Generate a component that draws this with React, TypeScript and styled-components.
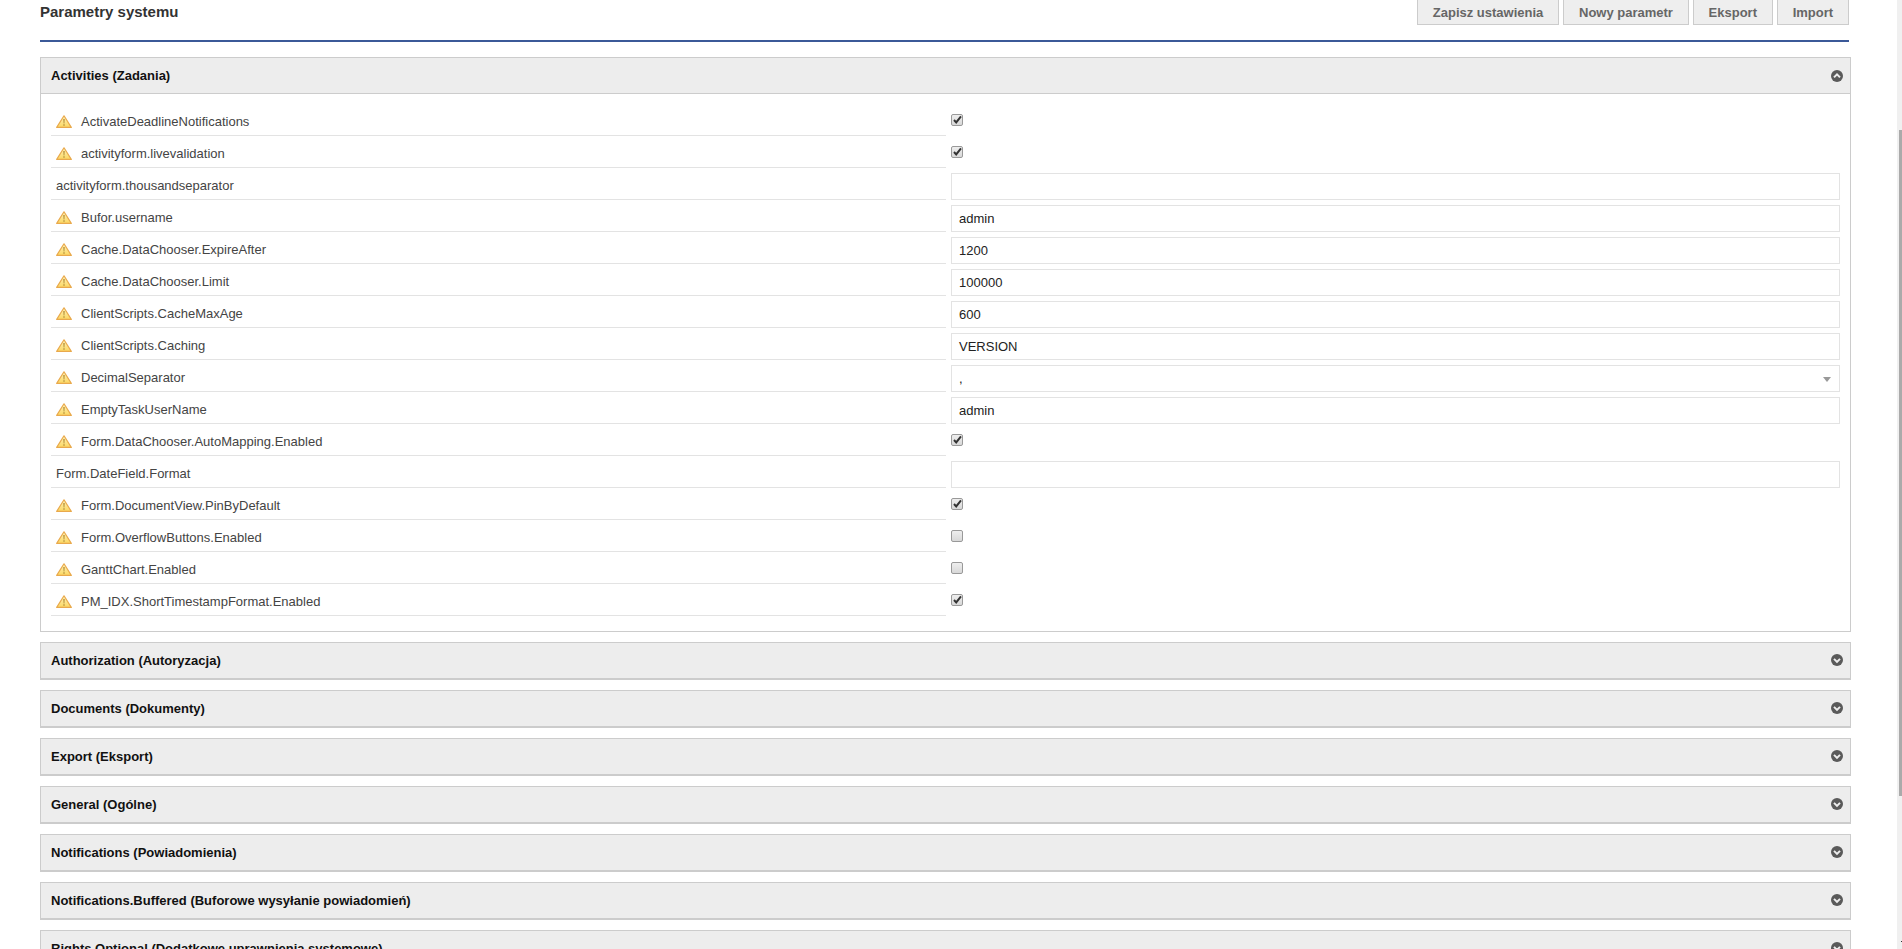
import { createGlobalStyle } from "styled-components";
import styled from "styled-components";

const GlobalStyle = createGlobalStyle`
  html, body {
    margin: 0;
    height: 100%;
    overflow: hidden;
    background: #fff;
  }
  body {
    font-family: "Liberation Sans", Arial, sans-serif;
    font-size: 13px;
  }
`;

type Param = {
  name: string;
  warn?: boolean;
  kind: "check" | "text" | "select";
  value?: string;
  checked?: boolean;
};

const params: Param[] = [
  { name: "ActivateDeadlineNotifications", warn: true, kind: "check", checked: true },
  { name: "activityform.livevalidation", warn: true, kind: "check", checked: true },
  { name: "activityform.thousandseparator", kind: "text", value: "" },
  { name: "Bufor.username", warn: true, kind: "text", value: "admin" },
  { name: "Cache.DataChooser.ExpireAfter", warn: true, kind: "text", value: "1200" },
  { name: "Cache.DataChooser.Limit", warn: true, kind: "text", value: "100000" },
  { name: "ClientScripts.CacheMaxAge", warn: true, kind: "text", value: "600" },
  { name: "ClientScripts.Caching", warn: true, kind: "text", value: "VERSION" },
  { name: "DecimalSeparator", warn: true, kind: "select", value: "," },
  { name: "EmptyTaskUserName", warn: true, kind: "text", value: "admin" },
  { name: "Form.DataChooser.AutoMapping.Enabled", warn: true, kind: "check", checked: true },
  { name: "Form.DateField.Format", kind: "text", value: "" },
  { name: "Form.DocumentView.PinByDefault", warn: true, kind: "check", checked: true },
  { name: "Form.OverflowButtons.Enabled", warn: true, kind: "check", checked: false },
  { name: "GanttChart.Enabled", warn: true, kind: "check", checked: false },
  { name: "PM_IDX.ShortTimestampFormat.Enabled", warn: true, kind: "check", checked: true },
];

const collapsed = [
  "Authorization (Autoryzacja)",
  "Documents (Dokumenty)",
  "Export (Eksport)",
  "General (Ogólne)",
  "Notifications (Powiadomienia)",
  "Notifications.Buffered (Buforowe wysyłanie powiadomień)",
  "Rights.Optional (Dodatkowe uprawnienia systemowe)",
];

const WarnIcon = () => (
  <svg width="16" height="13" viewBox="0 0 16 13">
    <defs>
      <linearGradient id="warnFill" x1="0" y1="0" x2="0" y2="1">
        <stop offset="0" stopColor="#fff3bd" />
        <stop offset="1" stopColor="#fbd65f" />
      </linearGradient>
    </defs>
    <path d="M8 .8 15.3 12.4H.7Z" fill="url(#warnFill)" stroke="#e9a94c" strokeWidth="1.2" strokeLinejoin="round" />
    <path d="M7.1 4h1.8l-.4 4.6h-1Z" fill="#c2a04a" />
    <rect x="7.2" y="9.2" width="1.6" height="1.6" fill="#c2a04a" />
  </svg>
);

const Chevron = ({ up }: { up?: boolean }) => (
  <ChevronIcon $up={up} width="12" height="12" viewBox="0 0 12 12">
    <circle cx="6" cy="6" r="6" fill="#5a5a5a" />
    <path
      d={up ? "M3 7.4 6 4.4l3 3" : "M3 4.9l3 3 3-3"}
      fill="none"
      stroke="#eee"
      strokeWidth="2"
    />
  </ChevronIcon>
);

const Checkbox = ({ checked }: { checked?: boolean }) => (
  <CheckBoxBox>
    {checked && (
      <svg width="9" height="9" viewBox="0 0 9 9">
        <path d="M1 5l2.2 2.4L8 1.4" fill="none" stroke="#333" strokeWidth="2" />
      </svg>
    )}
  </CheckBoxBox>
);

const ParamRow = ({ param }: { param: Param }) => (
  <Row>
    <NameCell>
      {param.warn && (
        <WarnSlot>
          <WarnIcon />
        </WarnSlot>
      )}
      {param.name}
    </NameCell>
    <ValueCell>
      {param.kind === "check" && <Checkbox checked={param.checked} />}
      {param.kind === "text" && <TextField>{param.value}</TextField>}
      {param.kind === "select" && (
        <TextField>
          {param.value}
          <Caret />
        </TextField>
      )}
    </ValueCell>
  </Row>
);

const App = () => {
  return (
    <Page>
      <GlobalStyle />
      <TopBar>
        <Title>Parametry systemu</Title>
        <Buttons>
          <ActionButton>Zapisz ustawienia</ActionButton>
          <ActionButton>Nowy parametr</ActionButton>
          <ActionButton>Eksport</ActionButton>
          <ActionButton>Import</ActionButton>
        </Buttons>
      </TopBar>
      <Panels>
        <div>
          <PanelHeader $open>
            Activities (Zadania)
            <Chevron up />
          </PanelHeader>
          <PanelBody>
            {params.map((p) => (
              <ParamRow key={p.name} param={p} />
            ))}
          </PanelBody>
        </div>
        {collapsed.map((title) => (
          <PanelHeader key={title}>
            {title}
            <Chevron />
          </PanelHeader>
        ))}
      </Panels>
      <ScrollTrack>
        <ScrollThumb />
      </ScrollTrack>
    </Page>
  );
};

export default App;

const Page = styled.div`
  height: 949px;
  overflow: hidden;
  padding: 0 51px 0 40px;
  box-sizing: border-box;
  position: relative;
`;

const TopBar = styled.div`
  display: flex;
  justify-content: space-between;
  align-items: flex-start;
  height: 40px;
  width: 1809px;
  border-bottom: 2px solid #3b5998;
`;

const Title = styled.h1`
  margin: 3px 0 0;
  font-size: 15px;
  line-height: 18px;
  font-weight: bold;
  color: #333;
`;

const Buttons = styled.div`
  display: flex;
  gap: 4px;
  margin-top: -10px;
`;

const ActionButton = styled.button`
  height: 35px;
  padding: 10px 14.85px 0;
  background: #eee;
  border: 1px solid #ccc;
  color: #666;
  font-family: "Liberation Sans", Arial, sans-serif;
  font-size: 13px;
  font-weight: bold;
`;

const Panels = styled.div`
  display: flex;
  flex-direction: column;
  gap: 10px;
  margin-top: 15px;
  width: 1811px;
`;

const PanelHeader = styled.div<{ $open?: boolean }>`
  display: flex;
  align-items: center;
  justify-content: space-between;
  box-sizing: border-box;
  height: ${(p) => (p.$open ? "37px" : "38px")};
  padding: 0 7px 0 10px;
  background: #ededed;
  border: 1px solid #ccc;
  border-bottom-width: ${(p) => (p.$open ? "1px" : "2px")};
  font-size: 13px;
  font-weight: bold;
  color: #111;
`;

const ChevronIcon = styled.svg<{ $up?: boolean }>`
  margin-bottom: ${(p) => (p.$up ? "0" : "1px")};
`;

const PanelBody = styled.div`
  box-sizing: border-box;
  height: 538px;
  padding: 10px 10px 0;
  border: 1px solid #ccc;
  border-top: none;
`;

const Row = styled.div`
  display: flex;
  height: 32px;
`;

const NameCell = styled.div`
  display: flex;
  align-items: center;
  box-sizing: border-box;
  width: 895px;
  padding: 4px 0 0 5px;
  border-bottom: 1px solid #e3e3e3;
  color: #444;
  font-size: 13px;
`;

const WarnSlot = styled.span`
  display: flex;
  width: 25px;
`;

const ValueCell = styled.div`
  display: flex;
  align-items: center;
  flex: 1;
  padding-left: 5px;
`;

const TextField = styled.div`
  position: relative;
  display: flex;
  align-items: center;
  box-sizing: border-box;
  width: 889px;
  height: 27px;
  padding-left: 7px;
  margin-top: 5px;
  background: #fff;
  border: 1px solid #e3e3e3;
  color: #222;
  font-size: 13px;
`;

const Caret = styled.span`
  position: absolute;
  right: 6px;
  top: 11px;
  border-left: 4px solid transparent;
  border-right: 4px solid transparent;
  border-top: 5px solid #999;
  margin-right: 2px;
`;

const CheckBoxBox = styled.span`
  display: flex;
  align-items: center;
  justify-content: center;
  box-sizing: border-box;
  width: 12px;
  height: 12px;
  border: 1px solid #999;
  border-radius: 2px;
  background: linear-gradient(#eee, #d8d8d8);
  margin-top: -1px;
`;

const ScrollTrack = styled.div`
  position: absolute;
  top: 0;
  right: 0;
  bottom: 0;
  width: 5px;
  background: #f0f0f0;

  &::after {
    content: "";
    position: absolute;
    top: 941px;
    right: 0;
    width: 1px;
    height: 1px;
    background: #333;
  }
`;

const ScrollThumb = styled.div`
  position: absolute;
  top: 130px;
  right: 0;
  width: 3px;
  height: 666px;
  background: #aaa;
`;
